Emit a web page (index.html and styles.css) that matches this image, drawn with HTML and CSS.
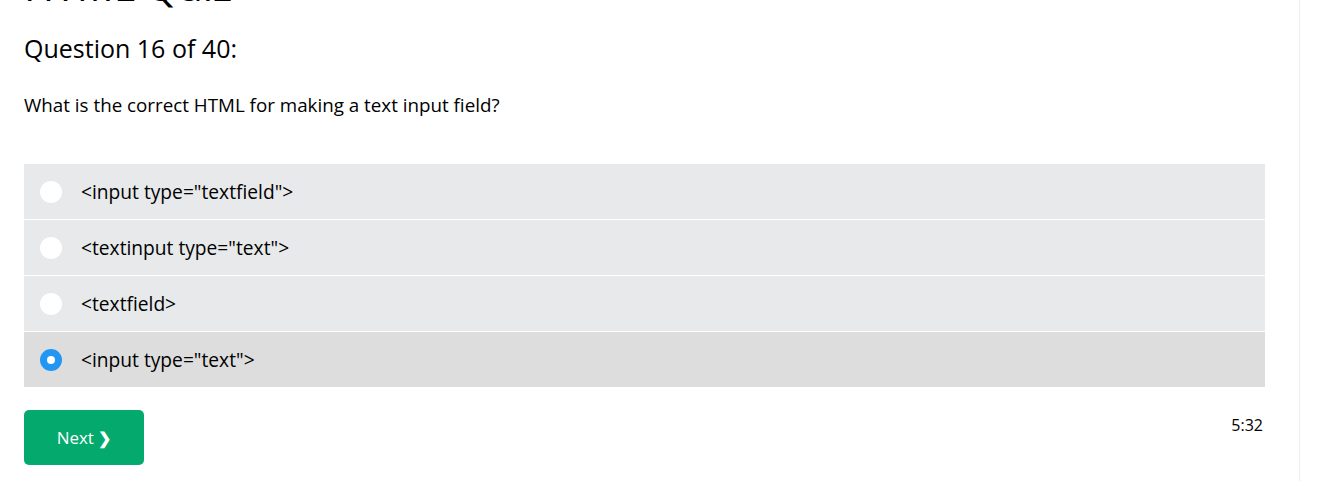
FILE: index.html
```html
<!DOCTYPE html>
<html>
<head>
<meta charset="utf-8">
<link rel="stylesheet" href="styles.css">
</head>
<body>
<div class="layout">
  <main class="main">
    <h1 class="title">HTML Quiz</h1>
    <h2 class="qnum">Question 16 of 40:</h2>
    <p class="qtext">What is the correct HTML for making a text input field?</p>
    <div class="options">
      <label class="option"><span class="radio"></span><span class="otext">&lt;input type="textfield"&gt;</span></label>
      <label class="option"><span class="radio"></span><span class="otext">&lt;textinput type="text"&gt;</span></label>
      <label class="option"><span class="radio"></span><span class="otext">&lt;textfield&gt;</span></label>
      <label class="option selected"><span class="radio checked"></span><span class="otext">&lt;input type="text"&gt;</span></label>
    </div>
    <div class="footer">
      <button class="next">Next <span class="chev">&#10095;</span></button>
      <span class="timer">5:32</span>
    </div>
  </main>
  <aside class="side"></aside>
</div>
</body>
</html>
```
FILE: styles.css
```css
html, body {
  margin: 0;
  padding: 0;
  background: #fff;
}
body {
  font-family: "Open Sans", "Noto Sans", sans-serif;
  color: #000;
  overflow: hidden;
  height: 481px;
}
.layout {
  display: flex;
  height: 481px;
}
.main {
  width: 1300px;
  box-sizing: border-box;
  padding: 0 34px 0 24px;
  border-right: 1px solid #eeeeee;
}
.title {
  font-size: 41px;
  font-weight: 400;
  margin: -40px 0 0 0;
  line-height: 50px;
  height: 50px;
}
.qnum {
  font-size: 25px;
  font-weight: 400;
  margin: 20px 0 0 0;
  line-height: 36px;
}
.qtext {
  font-size: 18.8px;
  margin: 26px 0 0 0;
  line-height: 26px;
}
.options {
  margin-top: 46px;
  display: flex;
  flex-direction: column;
  gap: 1px;
}
.option {
  display: flex;
  align-items: center;
  height: 55px;
  background: #e7e9eb;
  padding-left: 16px;
}
.option.selected {
  background: #dddddd;
}
.radio {
  width: 22px;
  height: 22px;
  border-radius: 50%;
  background: #fff;
  box-sizing: border-box;
  flex-shrink: 0;
}
.radio.checked {
  background: #fff;
  border: 7px solid #2196f3;
}
.otext {
  margin-left: 19px;
  font-size: 19.2px;
}
.footer {
  display: flex;
  justify-content: space-between;
  align-items: flex-start;
  margin-top: 23px;
}
.next {
  width: 120px;
  height: 55px;
  border: none;
  border-radius: 5px;
  background: #04aa6d;
  color: #fff;
  font-family: "Open Sans", "Noto Sans", sans-serif;
  font-size: 17px;
  padding: 0;
}
.chev {
  font-size: 16px;
  font-weight: 700;
}
.timer {
  font-size: 16px;
  margin-top: 4px;
  margin-right: 2px;
}
.side {
  flex: 1;
}
```
